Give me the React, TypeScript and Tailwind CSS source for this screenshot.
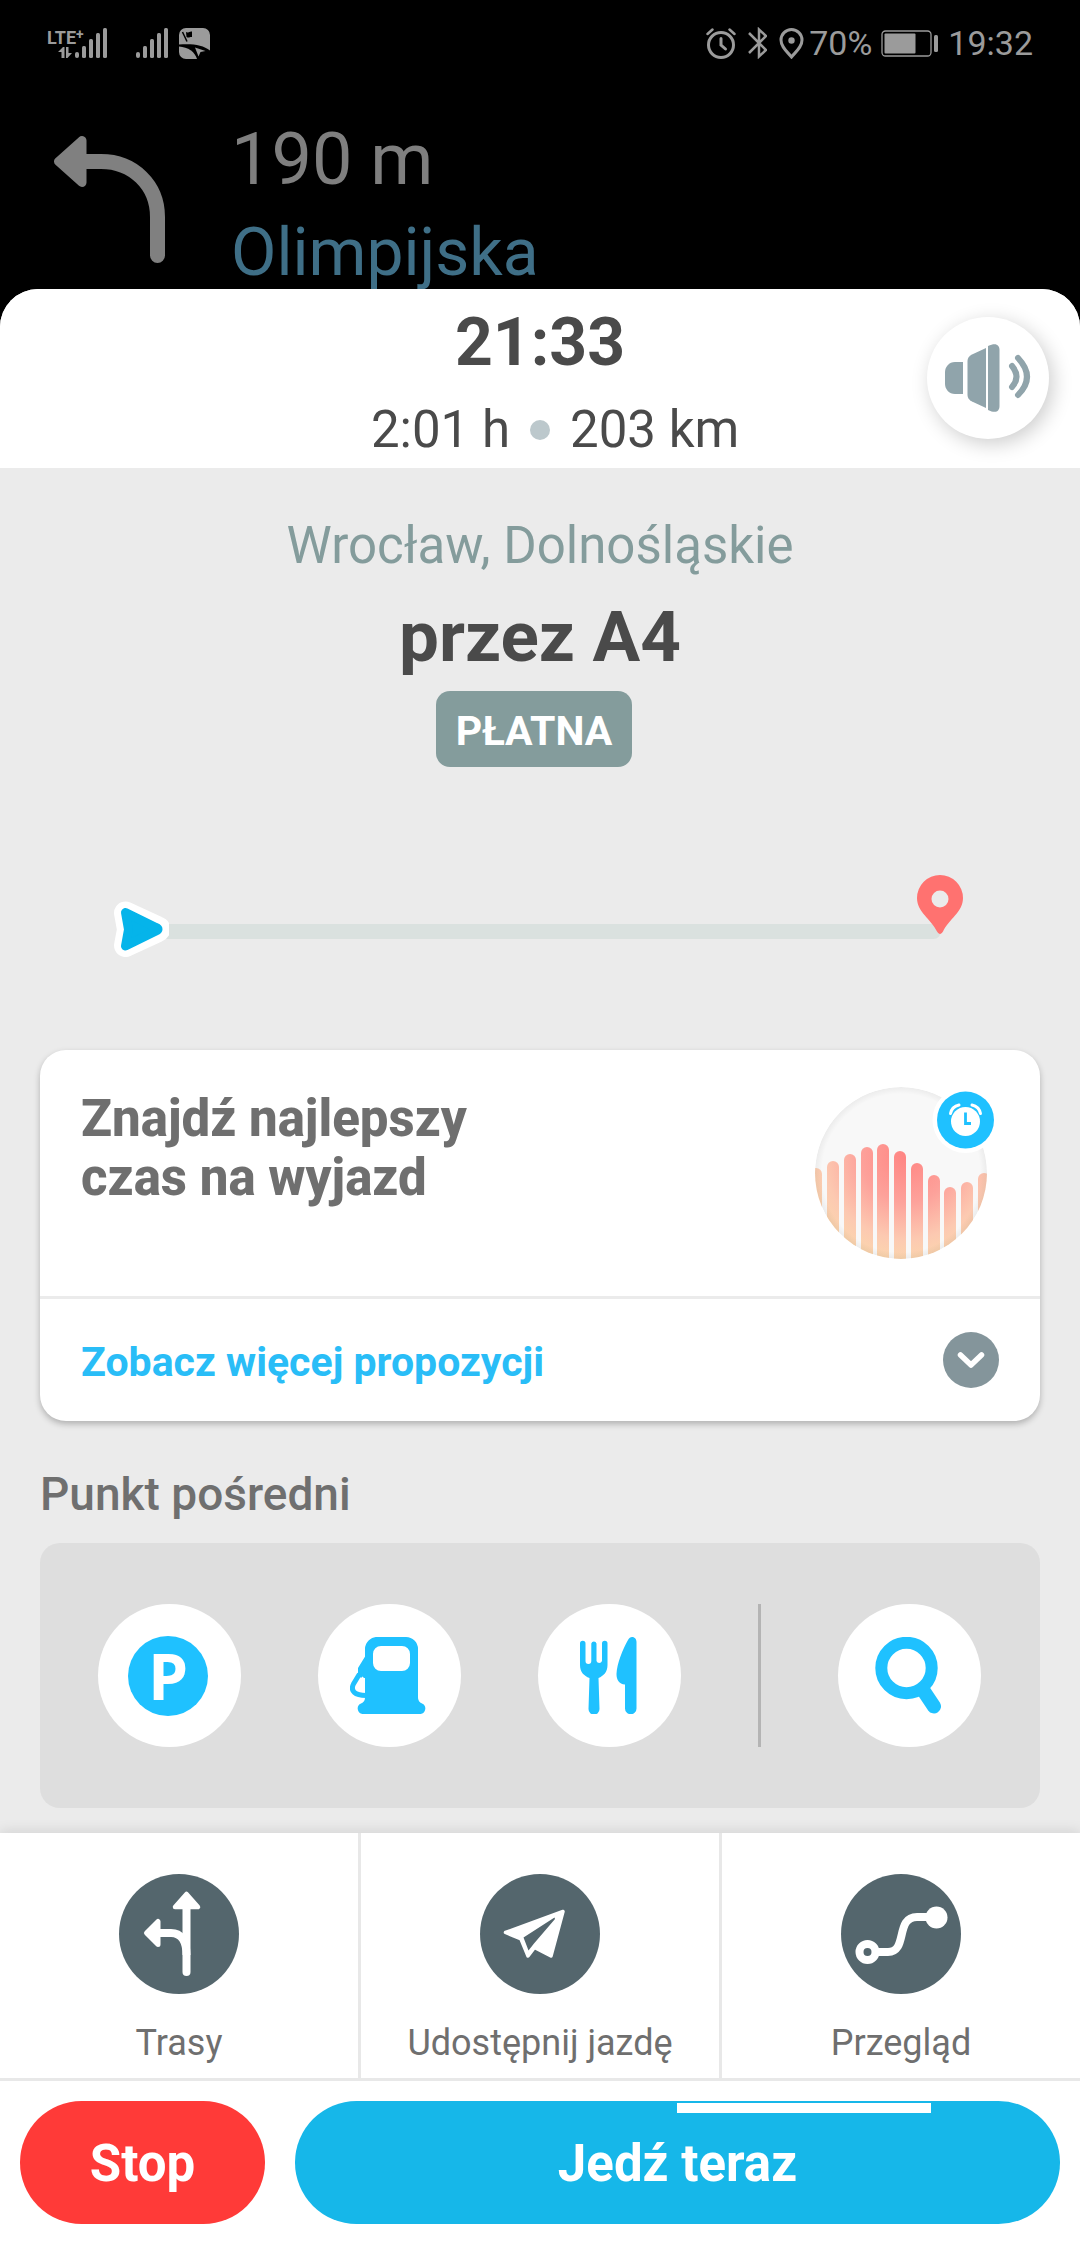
import type { ReactNode } from 'react'

const TRAFFIC_BARS = [
  { x: -5, top: 81 },
  { x: 12, top: 74 },
  { x: 29, top: 67 },
  { x: 46, top: 60 },
  { x: 62, top: 57 },
  { x: 79, top: 64 },
  { x: 96, top: 76 },
  { x: 113, top: 88 },
  { x: 129, top: 100 },
  { x: 146, top: 95 },
  { x: 163, top: 86 }
]

function SignalIcon() {
  return (
    <svg width="32" height="30" viewBox="0 0 32 30" fill="currentColor">
      <rect x="0" y="24" width="4" height="6" rx="2" />
      <rect x="7" y="18" width="4" height="12" rx="1.5" />
      <rect x="14" y="11" width="4" height="19" rx="1.5" />
      <rect x="21" y="5" width="4" height="25" rx="1.5" />
      <rect x="28" y="0" width="4" height="30" rx="1.5" />
    </svg>
  )
}

function DataArrowsIcon() {
  return (
    <svg width="14" height="11" viewBox="0 0 14 11" fill="currentColor">
      <path d="M0 5 5 0H6.500V11H3.500V5ZM14 6 9.500 11H8V0H10.500V6Z" />
    </svg>
  )
}

function MapAppIcon() {
  return (
    <svg width="31" height="31" viewBox="0 0 31 31">
      <path
        d="M7 0H24A7 7 0 0 1 31 7V22.500C24 17 14 15.500 0 16.500V7A7 7 0 0 1 7 0Z"
        fill="currentColor"
      />
      <path d="M0 18.500C9 19 16 24 18 31H7A7 7 0 0 1 0 24Z" fill="currentColor" />
      <path d="M16 19.500 26.500 23 21.500 24 19.500 28.500Z" fill="currentColor" />
      <path d="M3.500 4 8 13.500" stroke="#000" strokeWidth="1.500" />
      <path d="M7 4C9 5.500 10.500 3 13 3.500V9C11 8.500 10 10.500 7.500 9Z" fill="#000" />
    </svg>
  )
}

function AlarmIcon() {
  return (
    <svg width="30" height="31" viewBox="0 0 30 31" fill="none" stroke="currentColor" strokeLinecap="round">
      <circle cx="15" cy="17" r="12.500" strokeWidth="3" />
      <path d="M15 10.500V17L19.500 21" strokeWidth="3" />
      <path d="M1.500 6 6.500 1.500M28.500 6 23.500 1.500" strokeWidth="2.500" />
    </svg>
  )
}

function BluetoothIcon() {
  return (
    <svg width="19" height="32" viewBox="0 0 19 32" fill="none" stroke="currentColor" strokeWidth="2.500">
      <path d="M1 6 18 23 11 29.500V2.500L18 9 1 26" />
    </svg>
  )
}

function LocationIcon() {
  return (
    <svg width="25" height="31" viewBox="0 0 25 31">
      <path
        d="M12.500 29C8 23.500 2 19 2 12A10.500 10.500 0 0 1 23 12C23 19 17 23.500 12.500 29Z"
        fill="none"
        stroke="currentColor"
        strokeWidth="3"
      />
      <circle cx="12.500" cy="12.500" r="3.200" fill="currentColor" />
    </svg>
  )
}

function BatteryIcon() {
  return (
    <svg width="58" height="27" viewBox="0 0 58 27">
      <rect x="1" y="1" width="49" height="25" rx="3.500" fill="none" stroke="currentColor" strokeWidth="1.300" />
      <rect x="3.500" y="3.500" width="31" height="20" rx="1" fill="currentColor" />
      <rect x="53" y="5" width="4" height="17" rx="1.500" fill="currentColor" />
    </svg>
  )
}

function TurnLeftIcon() {
  return (
    <svg width="112" height="128" viewBox="0 0 112 128" fill="none" stroke="#808080">
      <path d="M28 25.500H47C79 25.500 103.500 49 103.500 81V119.500" strokeWidth="15" strokeLinecap="round" />
      <path d="M4.500 25.500 28 4.500V46.500Z" fill="#808080" strokeWidth="9" strokeLinejoin="round" />
    </svg>
  )
}

function SpeakerIcon() {
  return (
    <svg width="86" height="68" viewBox="0 0 86 68" fill="#90a4ab">
      <path d="M18 18V50H10C4 50 0 45 0 40V28C0 23 4 18 10 18Z" />
      <path d="M41 4V64L27 57.500C24 56 22.500 54 22.500 51V17C22.500 14 24 12 27 10.500Z" />
      <path d="M43 2C51 -2 54.500 1 54.500 6V62C54.500 67 51 70 43 66Z" />
      <g fill="none" stroke="#90a4ab" strokeWidth="6" strokeLinecap="round">
        <path d="M67 22Q76 33 67 43" />
        <path d="M73 14Q91 33 73 51" />
      </g>
    </svg>
  )
}

function PositionIcon() {
  return (
    <svg className="relative shrink-0" width="56" height="56" viewBox="0 0 56 56">
      <path
        d="M12.500 12 44 26.500Q48 28 44 30L12.500 44.500 15.500 28.500Z"
        fill="#fff"
        stroke="#fff"
        strokeWidth="23"
        strokeLinejoin="round"
      />
      <path
        d="M12.500 11.500 43 26.500Q47 28 43 30L12.500 45 15.500 28.500Z"
        fill="#05b4ea"
        stroke="#05b4ea"
        strokeWidth="9"
        strokeLinejoin="round"
      />
    </svg>
  )
}

function DestinationIcon() {
  return (
    <svg className="relative mb-[23px] shrink-0" width="46" height="59" viewBox="0 0 46 59">
      <path
        d="M23 59C22 59 21 58 20 56.500 14 44 0 37 0 23A23 23 0 0 1 46 23C46 37 32 44 26 56.500 25 58 24 59 23 59Z"
        fill="#ff7270"
      />
      <circle cx="23" cy="24" r="8.500" fill="#ebebeb" />
    </svg>
  )
}

function TrafficChart() {
  return (
    <svg width="179" height="172" viewBox="0 0 179 172">
      <defs>
        <clipPath id="traffic-clip">
          <circle cx="86" cy="86" r="86" />
        </clipPath>
        <radialGradient id="traffic-fill" gradientUnits="userSpaceOnUse" cx="92" cy="68" r="105">
          <stop offset="0" stopColor="#ff8482" />
          <stop offset="0.450" stopColor="#fda29b" />
          <stop offset="0.800" stopColor="#fcc9b1" />
          <stop offset="1" stopColor="#fbd5ae" />
        </radialGradient>
        <radialGradient id="traffic-edge">
          <stop offset="0.920" stopColor="#000" stopOpacity="0" />
          <stop offset="1" stopColor="#000" stopOpacity="0.050" />
        </radialGradient>
      </defs>
      <g clipPath="url(#traffic-clip)">
        <circle cx="86" cy="86" r="86" fill="#f8f8f8" />
        {TRAFFIC_BARS.map((bar) => (
          <rect key={bar.x} x={bar.x} y={bar.top} width="12" height="140" rx="6" fill="url(#traffic-fill)" />
        ))}
        <circle cx="86" cy="86" r="86" fill="url(#traffic-edge)" />
      </g>
      <circle cx="150.500" cy="33" r="33" fill="#fff" />
      <circle cx="150.500" cy="33" r="28.500" fill="#1fc1ff" />
      <circle cx="150.500" cy="34.500" r="14.500" fill="#fff" />
      <path d="M150.500 25.500V36.500H156" fill="none" stroke="#1fc1ff" strokeWidth="2.800" />
      <path
        d="M135.500 26.500Q137 19.500 144 18M165.500 26.500Q164 19.500 157 18"
        fill="none"
        stroke="#fff"
        strokeWidth="3"
        strokeLinecap="round"
      />
    </svg>
  )
}

function ChevronIcon() {
  return (
    <svg width="56" height="56" viewBox="0 0 56 56">
      <circle cx="28" cy="28" r="28" fill="#84959b" />
      <path
        d="M17.500 23 28 33 38.500 23"
        fill="none"
        stroke="#fff"
        strokeWidth="5.500"
        strokeLinecap="round"
        strokeLinejoin="round"
      />
    </svg>
  )
}

function FuelIcon() {
  return (
    <svg width="76" height="77" viewBox="0 0 76 77" fill="#1fc1ff">
      <path
        fillRule="evenodd"
        d="M28 0H56A12 12 0 0 1 68 12V60C68 64 70 65.500 72 66.500A5.500 5.500 0 0 1 70.500 77H12.500A5.500 5.500 0 0 1 11 66.500C13 65.500 15 64 15 61V12A12 12 0 0 1 28 0ZM31 9A8 8 0 0 0 23 17V26A8 8 0 0 0 31 34H52A8 8 0 0 0 60 26V17A8 8 0 0 0 52 9Z"
      />
      <path d="M16 18 8 31V37L11 41 12.500 39.500 14 41H16Z" />
      <path d="M9.500 37 3.500 47C0 54 5 58.500 16 58.500" fill="none" stroke="#1fc1ff" strokeWidth="5" />
    </svg>
  )
}

function FoodIcon() {
  return (
    <svg width="57" height="77" viewBox="0 0 57 77" fill="#1fc1ff">
      <path d="M0 6.500A2.700 2.700 0 0 1 5.500 6.500V24A2.900 2.900 0 0 0 11.300 24V6.500A2.700 2.700 0 0 1 16.500 6.500V24A2.900 2.900 0 0 0 22 24V6.500A2.700 2.700 0 0 1 27.500 6.500V28C27.500 35 23.500 39 18.500 41L19.500 72A5.500 5.500 0 0 1 8.500 72L9.500 41C4 39 0 35 0 28Z" />
      <path d="M52 0C55 0 56.500 2.500 56.500 5V71.500A5.500 5.500 0 0 1 45 71.500V47.500C39 47 36.500 43 36.500 37 37 26 43 12 48 3 49 1 50.500 0 52 0Z" />
    </svg>
  )
}

function SearchIcon() {
  return (
    <svg width="66" height="77" viewBox="0 0 66 77" fill="none" stroke="#1fc1ff">
      <circle cx="31.500" cy="31" r="25.200" strokeWidth="12" />
      <path d="M48 53 59 69.500" strokeWidth="14" strokeLinecap="round" />
    </svg>
  )
}

function RoutesIcon() {
  return (
    <svg width="120" height="120" viewBox="0 0 120 120" fill="#fff" stroke="#fff" strokeLinejoin="round">
      <circle cx="60" cy="60" r="60" fill="#54666d" stroke="none" />
      <path d="M67.500 32V98" fill="none" strokeWidth="8" strokeLinecap="round" />
      <path d="M38 59H52C62 59 67.500 67 67.500 81" fill="none" strokeWidth="8" />
      <path d="M67.500 20 79 33H56Z" strokeWidth="4.500" />
      <path d="M27.500 59 39 47.500V70.500Z" strokeWidth="5" />
    </svg>
  )
}

function ShareIcon() {
  return (
    <svg width="120" height="120" viewBox="0 0 120 120">
      <circle cx="60" cy="60" r="60" fill="#54666d" />
      <path
        d="M25.500 58.500 83 37.500 71 82 54.500 73.500 48 82 41 65Z"
        fill="#fff"
        stroke="#fff"
        strokeWidth="3.500"
        strokeLinejoin="round"
      />
      <path d="M43.500 63.500 74.500 43.500 75 45 54 69.500 48.500 76.500Z" fill="#54666d" />
    </svg>
  )
}

function OverviewIcon() {
  return (
    <svg width="120" height="120" viewBox="0 0 120 120" fill="none" stroke="#fff" strokeWidth="8">
      <circle cx="60" cy="60" r="60" fill="#54666d" stroke="none" />
      <circle cx="26.500" cy="78" r="8" />
      <path d="M36 78H47C67 78 54 43 76 43H90" />
      <circle cx="95.500" cy="43.500" r="11" fill="#fff" stroke="none" />
    </svg>
  )
}

function StopoverButton({ label, children }: { label: string; children: ReactNode }) {
  return (
    <button
      type="button"
      aria-label={label}
      className="flex size-[143px] items-center justify-center rounded-full bg-white pr-[3px]"
    >
      {children}
    </button>
  )
}

function ActionButton({ label, icon }: { label: string; icon: ReactNode }) {
  return (
    <button type="button" className="flex flex-1 flex-col items-center bg-white pt-[41px] pb-[13px]">
      {icon}
      <span className="mt-[27px] text-[36px] leading-[44px] text-[#6f6f6f]">{label}</span>
    </button>
  )
}

function StatusBar() {
  return (
    <div className="flex h-[86px] items-center justify-between pr-[47px] pl-[47px] text-[#9b9b9b]">
      <div className="flex items-center">
        <div className="flex w-[28px] flex-col items-start">
          <span className="flex items-start font-['Liberation_Sans_Narrow',Roboto,sans-serif] text-[18px] leading-[19px] font-bold whitespace-nowrap">
            LTE<span className="text-[14px] leading-[12px]">+</span>
          </span>
          <span className="pl-[11px]">
            <DataArrowsIcon />
          </span>
        </div>
        <SignalIcon />
        <div className="flex items-center gap-[11px] pl-[29px]">
          <SignalIcon />
          <MapAppIcon />
        </div>
      </div>
      <div className="flex items-center text-[34px] leading-[40px]">
        <div className="flex items-center gap-3 pr-[5px]">
          <AlarmIcon />
          <BluetoothIcon />
          <LocationIcon />
        </div>
        <span className="pr-[9px]">70%</span>
        <BatteryIcon />
        <span className="pl-[9px]">19:32</span>
      </div>
    </div>
  )
}

export default function App() {
  return (
    <div className="flex min-h-screen flex-col bg-black font-[Roboto,sans-serif]">
      <StatusBar />

      <div className="flex pt-[34px] pl-[54px]">
        <div className="pt-4">
          <TurnLeftIcon />
        </div>
        <div className="flex h-[169px] flex-col gap-[17px] pt-[2px] pl-[65px]">
          <p className="text-[72px] leading-[76px] text-[#7f7f7f]">190 m</p>
          <p className="text-[66px] leading-[76px] text-[#3f6f87]">Olimpijska</p>
        </div>
      </div>

      <main className="z-10 flex flex-1 flex-col overflow-hidden rounded-t-[38px] bg-[#ebebeb]">
        <header className="relative flex flex-col gap-6 bg-white pt-[21px] pb-2 text-[#4a4a4a]">
          <h1 className="text-center text-[66px] leading-[66px] font-bold">21:33</h1>
          <div className="grid grid-cols-[1fr_auto_1fr] items-center gap-[20px] text-[51px] leading-[60px]">
            <span className="text-right">2:01 h</span>
            <span className="size-5 rounded-full bg-[#bcc8cc]" />
            <span>203 km</span>
          </div>
          <button
            type="button"
            aria-label="Dźwięk"
            className="absolute top-7 right-[31px] flex size-[122px] items-center justify-center rounded-full bg-white shadow-[4px_5px_20px_rgba(0,0,0,0.2)]"
          >
            <SpeakerIcon />
          </button>
        </header>

        <section className="flex flex-1 flex-col px-10 pt-12 pb-[25px]">
          <p className="text-center text-[51px] leading-[60px] text-[#849c9c]">Wrocław, Dolnośląskie</p>
          <h2 className="mt-[21px] text-center text-[71px] leading-[80px] font-bold text-[#4a4a4a]">przez A4</h2>
          <div className="mt-[14px] flex justify-center pr-3">
            <span className="rounded-[14px] bg-[#849c9c] px-5 pt-[5px] text-[41px] leading-[71px] font-bold text-white">
              PŁATNA
            </span>
          </div>

          <div className="mt-[108px] flex items-end pr-[77px] pl-[73px]">
            <PositionIcon />
            <div className="-mr-6 mb-[18px] -ml-3 h-[15px] flex-1 rounded-r-full bg-[#dae1df]" />
            <DestinationIcon />
          </div>

          <div className="mt-[93px] rounded-[26px] bg-white shadow-[0_3px_6px_rgba(0,0,0,0.25)]">
            <div className="flex h-[246px] items-start justify-between pt-[37px] pr-[46px] pl-[41px]">
              <h3 className="pt-[2px] text-[51px] leading-[59px] font-extrabold text-[#6f6f6f]">
                Znajdź najlepszy
                <br />
                czas na wyjazd
              </h3>
              <TrafficChart />
            </div>
            <button
              type="button"
              className="flex w-full items-center justify-between border-t-[3px] border-[#ebebeb] py-[33px] pr-[41px] pl-[41px]"
            >
              <span className="pt-1 text-[41px] leading-[52px] font-bold text-[#29bdf7]">Zobacz więcej propozycji</span>
              <ChevronIcon />
            </button>
          </div>

          <h3 className="mt-[43px] text-[46px] leading-[60px] font-medium text-[#6f6f6f]">Punkt pośredni</h3>
          <div className="mt-[19px] flex items-center justify-between rounded-[20px] bg-[#dedede] pt-[61px] pr-[59px] pb-[61px] pl-[58px]">
            <StopoverButton label="Parking">
              <span className="flex size-20 items-center justify-center rounded-full bg-[#1fc1ff] font-['Open_Sans',sans-serif] text-[64px] leading-[80px] font-bold text-white">
                P
              </span>
            </StopoverButton>
            <StopoverButton label="Stacje paliw">
              <FuelIcon />
            </StopoverButton>
            <StopoverButton label="Jedzenie">
              <FoodIcon />
            </StopoverButton>
            <div className="h-[143px] w-[3px] bg-[#b4b4b4]" />
            <StopoverButton label="Szukaj">
              <SearchIcon />
            </StopoverButton>
          </div>
        </section>

        <footer className="bg-white shadow-[0_-2px_12px_rgba(0,0,0,0.1)]">
          <nav className="flex gap-[3px] border-b-[3px] border-[#e8e8e8] bg-[#e8e8e8]">
            <ActionButton label="Trasy" icon={<RoutesIcon />} />
            <ActionButton label="Udostępnij jazdę" icon={<ShareIcon />} />
            <ActionButton label="Przegląd" icon={<OverviewIcon />} />
          </nav>
          <div className="flex gap-[30px] p-5 text-[51px] leading-[60px] font-bold text-white">
            <button type="button" className="h-[123px] w-[245px] rounded-full bg-[#ff3a38] pt-[3px]">
              Stop
            </button>
            <button type="button" className="relative h-[123px] flex-1 rounded-full bg-[#16b7e9] pt-[3px]">
              Jedź teraz
              <span className="absolute top-[2px] right-[129px] h-[10px] w-[254px] bg-white" />
            </button>
          </div>
        </footer>
      </main>
    </div>
  )
}
